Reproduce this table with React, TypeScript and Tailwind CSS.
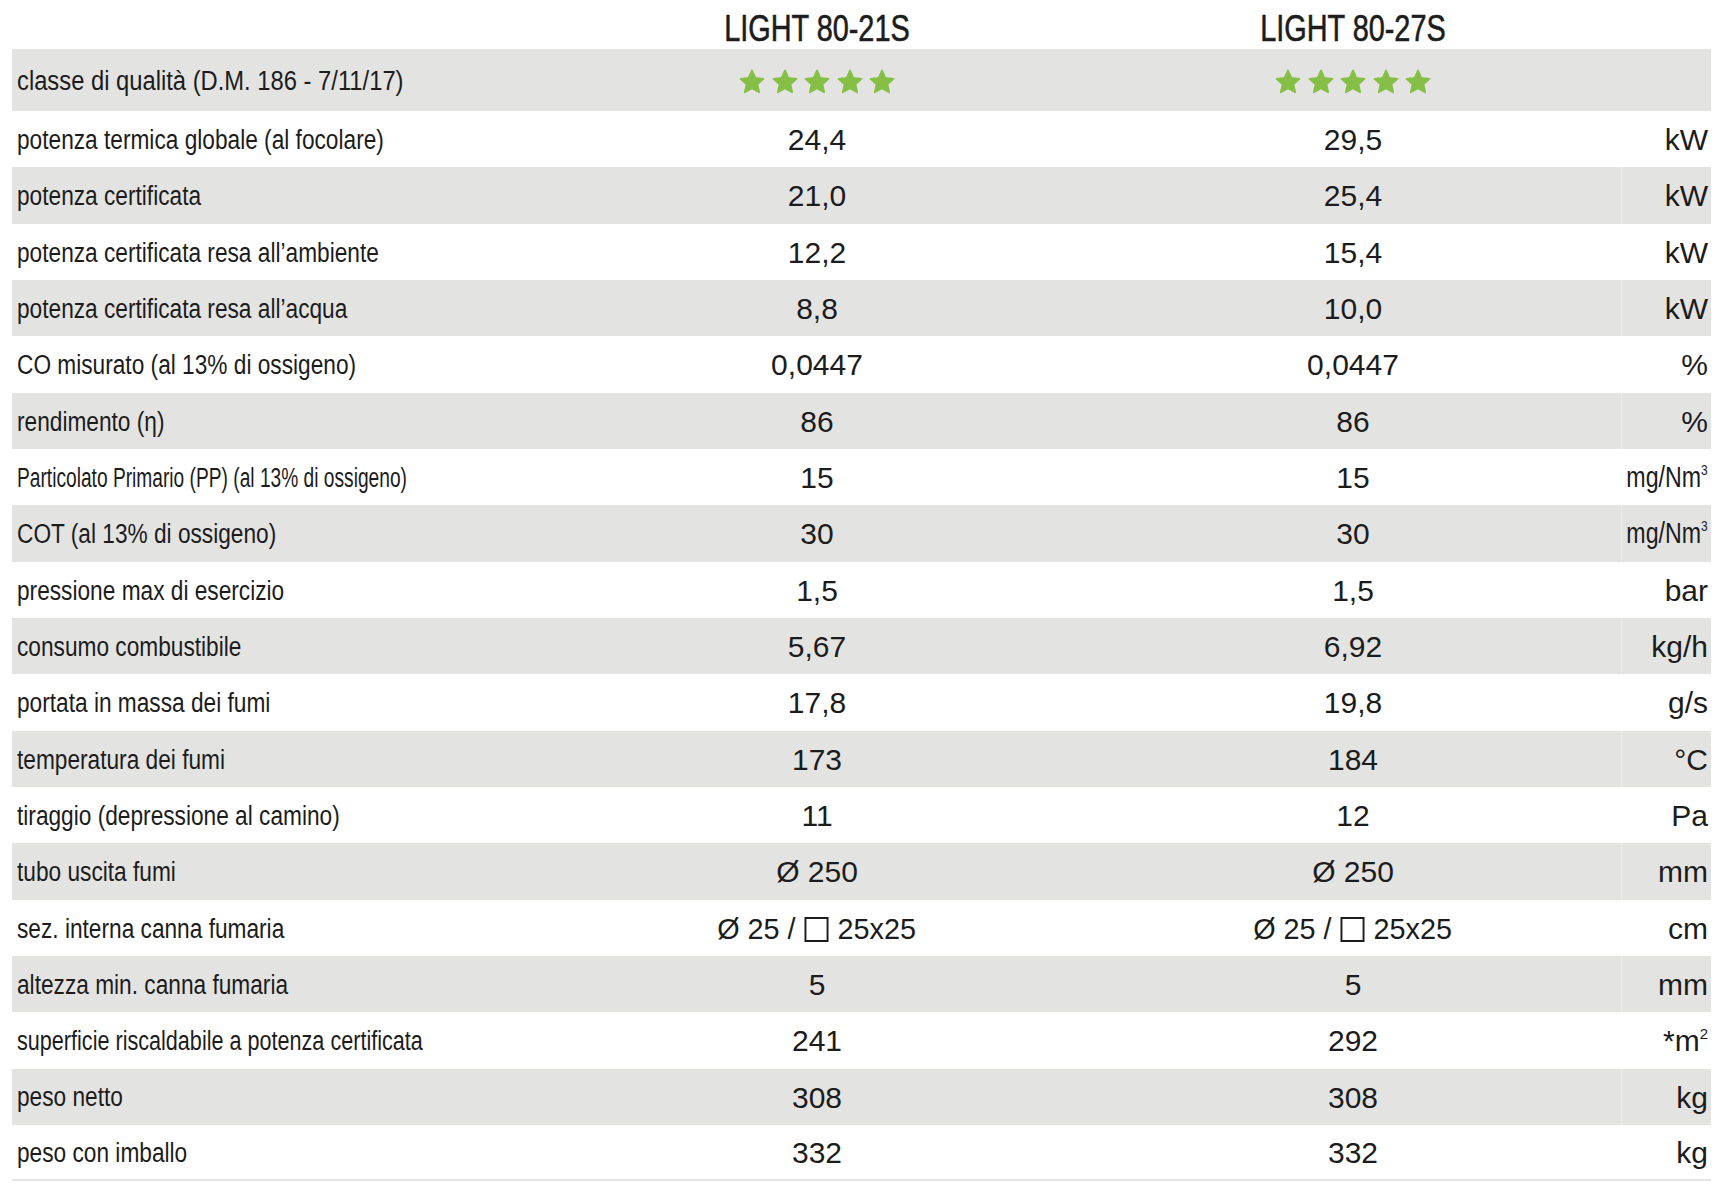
import React from "react";

type Row = { label: string; sx: string; a: React.ReactNode; b: React.ReactNode; unit: React.ReactNode };

const Sq = () => (
  <span className="inline-block w-[25px] h-[25px] border-2 border-[#1c1c1c] align-[-3px] mx-[1px]" />
);

const sez = (
  <span className="inline-block [transform:scaleX(0.96)]">
    Ø 25 / <Sq /> 25x25
  </span>
);

const mg = (
  <span className="inline-block origin-right [transform:scaleX(0.8)] text-[29px]">
    mg/Nm<sup className="text-[15px] relative top-[-12px]">3</sup>
  </span>
);

const L0 = "[transform:scaleX(0.84)]";

const rows: Row[] = [
  { label: "potenza termica globale (al focolare)", sx: L0, a: "24,4", b: "29,5", unit: "kW" },
  { label: "potenza certificata", sx: L0, a: "21,0", b: "25,4", unit: "kW" },
  { label: "potenza certificata resa all’ambiente", sx: L0, a: "12,2", b: "15,4", unit: "kW" },
  { label: "potenza certificata resa all’acqua", sx: L0, a: "8,8", b: "10,0", unit: "kW" },
  { label: "CO misurato (al 13% di ossigeno)", sx: L0, a: "0,0447", b: "0,0447", unit: "%" },
  { label: "rendimento (η)", sx: L0, a: "86", b: "86", unit: "%" },
  { label: "Particolato Primario (PP) (al 13% di ossigeno)", sx: "[transform:scaleX(0.71)]", a: "15", b: "15", unit: mg },
  { label: "COT (al 13% di ossigeno)", sx: L0, a: "30", b: "30", unit: mg },
  { label: "pressione max di esercizio", sx: L0, a: "1,5", b: "1,5", unit: "bar" },
  { label: "consumo combustibile", sx: L0, a: "5,67", b: "6,92", unit: "kg/h" },
  { label: "portata in massa dei fumi", sx: L0, a: "17,8", b: "19,8", unit: "g/s" },
  { label: "temperatura dei fumi", sx: L0, a: "173", b: "184", unit: "°C" },
  { label: "tiraggio (depressione al camino)", sx: L0, a: "11", b: "12", unit: "Pa" },
  { label: "tubo uscita fumi", sx: L0, a: "Ø 250", b: "Ø 250", unit: "mm" },
  { label: "sez. interna canna fumaria", sx: L0, a: sez, b: sez, unit: "cm" },
  { label: "altezza min. canna fumaria", sx: L0, a: "5", b: "5", unit: "mm" },
  {
    label: "superficie riscaldabile a potenza certificata",
    sx: "[transform:scaleX(0.8)]",
    a: "241",
    b: "292",
    unit: (
      <span>
        *m<sup className="text-[15px] relative top-[-12px]">2</sup>
      </span>
    ),
  },
  { label: "peso netto", sx: L0, a: "308", b: "308", unit: "kg" },
  { label: "peso con imballo", sx: L0, a: "332", b: "332", unit: "kg" },
];

const Star = () => (
  <svg width="28" height="28" viewBox="0 0 24 24" className="block">
    <polygon
      points="12,2.2 14.9,8.6 21.8,9.3 16.6,13.9 18.1,20.8 12,17.3 5.9,20.8 7.4,13.9 2.2,9.3 9.1,8.6"
      fill="#86bf46"
      stroke="#86bf46"
      strokeWidth="1.6"
      strokeLinejoin="round"
    />
  </svg>
);

const Stars = () => (
  <div className="flex items-center justify-center gap-[4.5px] pt-[3px]">
    <Star />
    <Star />
    <Star />
    <Star />
    <Star />
  </div>
);

const grid = "grid grid-cols-[537px_536px_536px_90px]";
const head = "inline-block text-[37px] [transform:scaleX(0.78)] [-webkit-text-stroke:0.6px_#1c1c1c]";

export default function App() {
  return (
    <div
      className="w-[1736px] h-[1190px] bg-white text-[#1c1c1c]"
      style={{ fontFamily: '"Liberation Sans", Arial, sans-serif' }}
    >
      <div className="ml-[12px] w-[1699px]">
        <div className={`${grid} h-[49px] items-center`}>
          <div />
          <div className="text-center whitespace-nowrap pt-[1px]">
            <span className={head}>LIGHT 80-21S</span>
          </div>
          <div className="text-center whitespace-nowrap pt-[1px]">
            <span className={head}>LIGHT 80-27S</span>
          </div>
          <div />
        </div>
        <div className={`${grid} h-[62px] items-center bg-[#e3e3e2]`}>
          <div className="pl-[5px] pt-[2px] text-[27px] whitespace-nowrap">
            <span className="inline-block origin-left [transform:scaleX(0.88)]">
              classe di qualità (D.M. 186 - 7/11/17)
            </span>
          </div>
          <Stars />
          <Stars />
          <div className="h-full" />
        </div>
        {rows.map((r, i) => {
          const gray = i % 2 === 1;
          return (
            <div
              key={i}
              className={`${grid} h-[56.33px] items-center ${gray ? "bg-[#e3e3e2]" : "bg-white"} ${
                i === rows.length - 1 ? "border-b-2 border-[#e5e5e5]" : ""
              }`}
            >
              <div className="pl-[5px] pt-[2px] whitespace-nowrap text-[27px]">
                <span className={`inline-block origin-left ${r.sx}`}>{r.label}</span>
              </div>
              <div className="text-center pt-[1px] text-[30px] whitespace-nowrap">{r.a}</div>
              <div className="text-center pt-[1px] text-[30px] whitespace-nowrap">{r.b}</div>
              <div
                className={`h-full flex items-center justify-end pr-[3px] pt-[1px] whitespace-nowrap border-l text-[30px] ${
                  gray ? "border-[#ececec]" : "border-white"
                }`}
              >
                {r.unit}
              </div>
            </div>
          );
        })}
      </div>
    </div>
  );
}
